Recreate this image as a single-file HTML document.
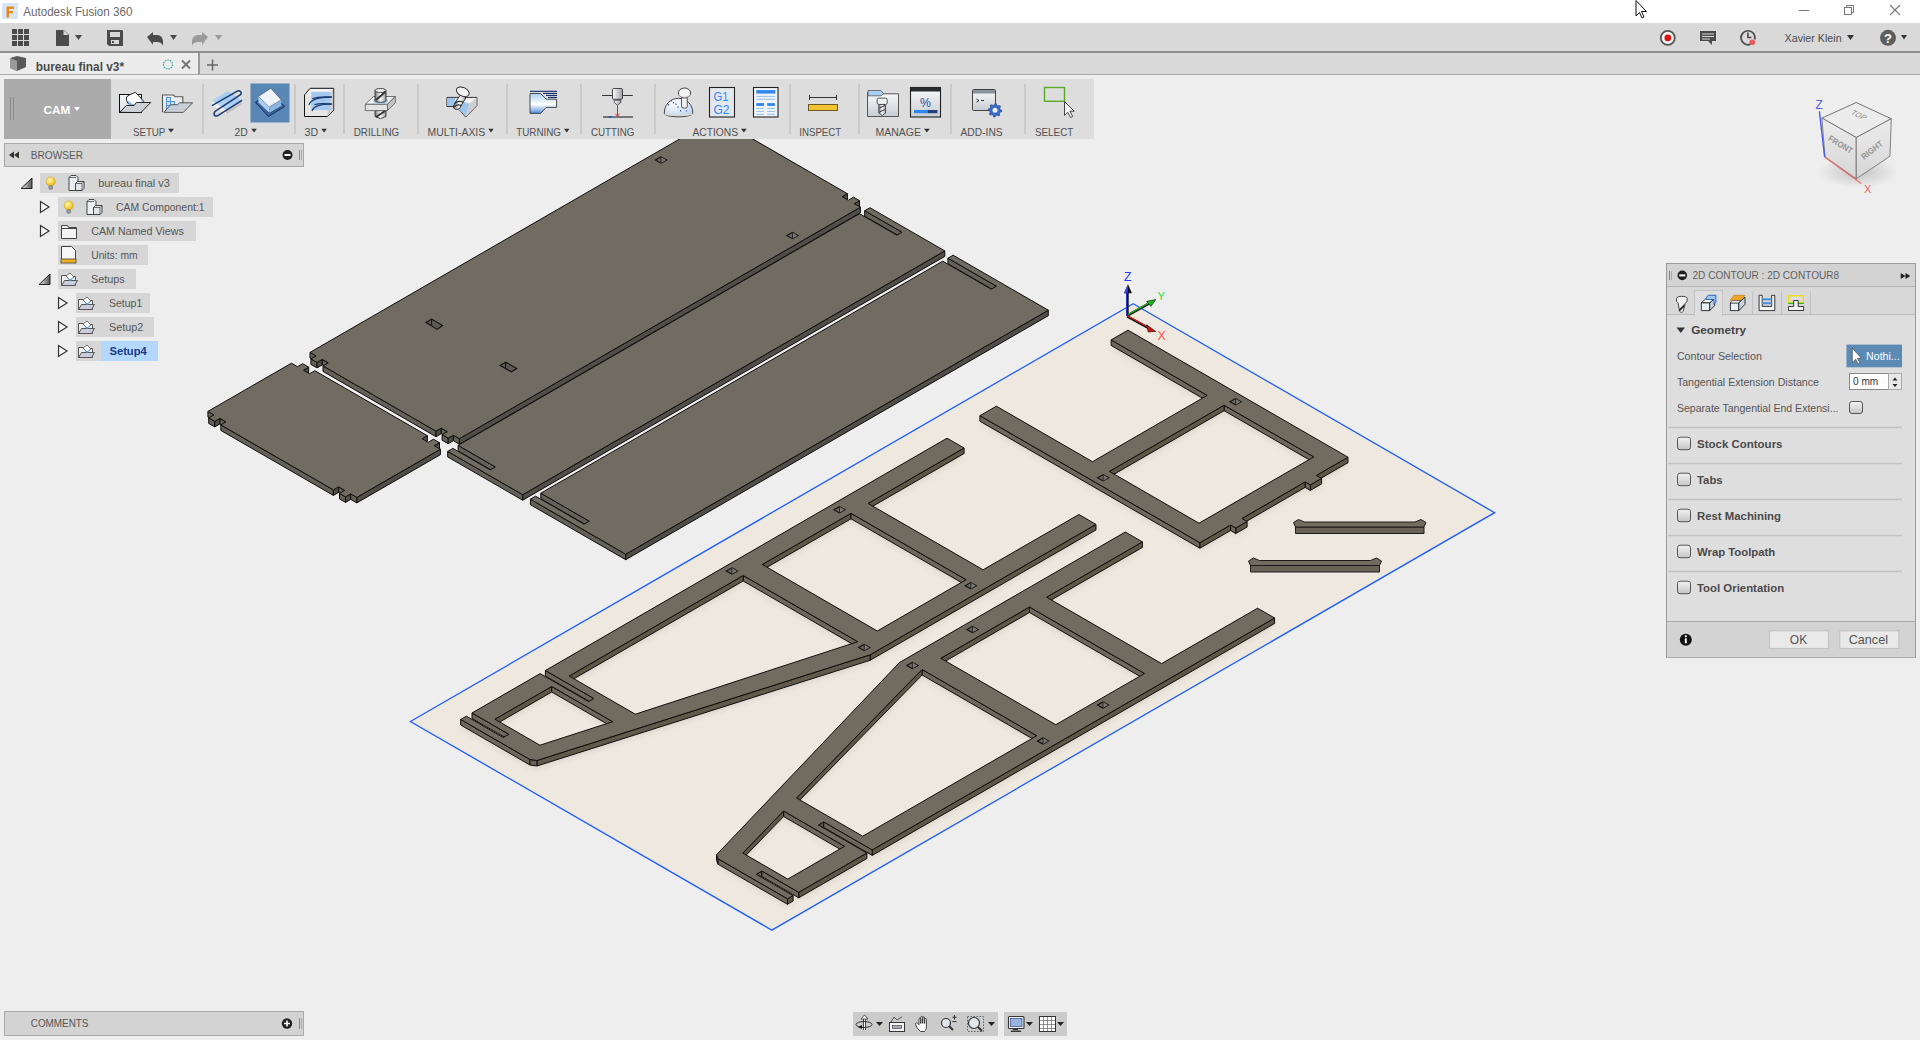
<!DOCTYPE html><html><head><meta charset="utf-8"><style>
*{margin:0;padding:0;box-sizing:border-box}
html,body{width:1920px;height:1040px;overflow:hidden;background:#eeeeee;font-family:"Liberation Sans",sans-serif;}
.a{position:absolute}
.t{position:absolute;white-space:nowrap;line-height:1}
svg{overflow:visible}
</style></head><body>
<svg width="1920" height="1040" viewBox="0 0 1920 1040" style="position:absolute;left:0;top:0">
<defs><filter id="sh" x="-5%" y="-5%" width="110%" height="110%"><feGaussianBlur stdDeviation="3"/></filter></defs>
<path d="M410.4,721.5L1133.2,303.7L1494.6,512.7L771.8,930.1Z" fill="#efe8de" stroke="#1f60fa" stroke-width="1.35"/>
<g stroke="#0e0d0b" stroke-width="1" stroke-linejoin="round">
<path d="M308.7,367.2L303.5,370.2L303.5,375.7L308.7,372.7Z" fill="#504e48"/>
<path d="M213.9,414.9L207.9,411.4L207.9,416.9L213.9,420.4Z" fill="#646159"/>
<path d="M214.8,421.4L208.7,417.9L208.7,423.4L214.8,426.9Z" fill="#646159"/>
<path d="M220.0,418.4L214.8,421.4L214.8,426.9L220.0,423.9Z" fill="#504e48"/>
<path d="M226.0,421.9L220.0,418.4L220.0,423.9L226.0,427.4Z" fill="#646159"/>
<path d="M427.4,435.7L422.2,438.7L422.2,444.2L427.4,441.2Z" fill="#504e48"/>
<path d="M439.5,442.7L434.3,445.7L434.3,451.2L439.5,448.2Z" fill="#504e48"/>
<path d="M333.4,489.9L220.8,424.9L220.8,430.4L333.4,495.4Z" fill="#646159"/>
<path d="M440.4,449.2L356.8,497.4L356.8,502.9L440.4,454.7Z" fill="#504e48"/>
<path d="M338.6,486.9L333.4,489.9L333.4,495.4L338.6,492.4Z" fill="#504e48"/>
<path d="M344.7,490.4L338.6,486.9L338.6,492.4L344.7,495.9Z" fill="#646159"/>
<path d="M345.5,496.9L339.5,493.4L339.5,498.9L345.5,502.4Z" fill="#646159"/>
<path d="M350.7,493.9L345.5,496.9L345.5,502.4L350.7,499.4Z" fill="#504e48"/>
<path d="M356.8,497.4L350.7,493.9L350.7,499.4L356.8,502.9Z" fill="#646159"/>
<path d="M291.4,363.2L297.5,366.7L302.7,363.7L308.7,367.2L303.5,370.2L309.6,373.7L314.8,370.7L427.4,435.7L422.2,438.7L428.3,442.2L433.5,439.2L439.5,442.7L434.3,445.7L440.4,449.2L356.8,497.4L350.7,493.9L345.5,496.9L339.5,493.4L344.7,490.4L338.6,486.9L333.4,489.9L220.8,424.9L226.0,421.9L220.0,418.4L214.8,421.4L208.7,417.9L213.9,414.9L207.9,411.4Z" fill="#706c61" fill-rule="evenodd"/>
</g>
<g stroke="#0e0d0b" stroke-width="1" stroke-linejoin="round">
<path d="M728.3,124.9L723.1,127.9L723.1,133.4L728.3,130.4Z" fill="#504e48"/>
<path d="M847.4,193.7L842.2,196.7L842.2,202.2L847.4,199.2Z" fill="#504e48"/>
<path d="M859.5,200.7L854.3,203.7L854.3,209.2L859.5,206.2Z" fill="#504e48"/>
<path d="M860.4,207.2L459.4,438.7L459.4,444.2L860.4,212.7Z" fill="#504e48"/>
<path d="M316.1,355.9L310.0,352.4L310.0,357.9L316.1,361.4Z" fill="#646159"/>
<path d="M317.0,362.4L310.9,358.9L310.9,364.4L317.0,367.9Z" fill="#646159"/>
<path d="M322.2,359.4L317.0,362.4L317.0,367.9L322.2,364.9Z" fill="#504e48"/>
<path d="M328.2,362.9L322.2,359.4L322.2,364.9L328.2,368.4Z" fill="#646159"/>
<path d="M436.0,431.2L323.0,365.9L323.0,371.4L436.0,436.7Z" fill="#646159"/>
<path d="M441.2,428.2L436.0,431.2L436.0,436.7L441.2,433.7Z" fill="#504e48"/>
<path d="M447.3,431.7L441.2,428.2L441.2,433.7L447.3,437.2Z" fill="#646159"/>
<path d="M448.2,438.2L442.1,434.7L442.1,440.2L448.2,443.7Z" fill="#646159"/>
<path d="M453.4,435.2L448.2,438.2L448.2,443.7L453.4,440.7Z" fill="#504e48"/>
<path d="M459.4,438.7L453.4,435.2L453.4,440.7L459.4,444.2Z" fill="#646159"/>
<path d="M711.0,120.9L717.1,124.4L722.3,121.4L728.3,124.9L723.1,127.9L729.2,131.4L734.4,128.4L847.4,193.7L842.2,196.7L848.3,200.2L853.5,197.2L859.5,200.7L854.3,203.7L860.4,207.2L459.4,438.7L453.4,435.2L448.2,438.2L442.1,434.7L447.3,431.7L441.2,428.2L436.0,431.2L323.0,365.9L328.2,362.9L322.2,359.4L317.0,362.4L310.9,358.9L316.1,355.9L310.0,352.4Z" fill="#706c61" fill-rule="evenodd"/>
</g>
<g stroke="#0e0d0b" stroke-width="1" stroke-linejoin="round">
<path d="M902.0,232.2L864.7,210.7L864.7,216.2L902.0,237.7Z" fill="#646159"/>
<path d="M944.8,250.9L522.7,494.7L522.7,500.2L944.8,256.4Z" fill="#504e48"/>
<path d="M495.4,466.9L458.1,445.4L458.1,450.9L495.4,472.4Z" fill="#646159"/>
<path d="M522.7,494.7L447.7,451.4L447.7,456.9L522.7,500.2Z" fill="#646159"/>
<path d="M869.9,207.7L944.8,250.9L522.7,494.7L447.7,451.4L452.9,448.4L490.2,469.9L495.4,466.9L458.1,445.4L859.5,213.7L896.8,235.2L902.0,232.2L864.7,210.7Z" fill="#706c61" fill-rule="evenodd"/>
</g>
<g stroke="#0e0d0b" stroke-width="1" stroke-linejoin="round">
<path d="M996.4,286.2L947.9,258.2L947.9,263.7L996.4,291.7Z" fill="#646159"/>
<path d="M1048.3,310.2L625.7,554.2L625.7,559.7L1048.3,315.7Z" fill="#504e48"/>
<path d="M589.3,521.2L540.8,493.2L540.8,498.7L589.3,526.7Z" fill="#646159"/>
<path d="M625.7,554.2L530.4,499.2L530.4,504.7L625.7,559.7Z" fill="#646159"/>
<path d="M953.1,255.2L1048.3,310.2L625.7,554.2L530.4,499.2L535.6,496.2L584.1,524.2L589.3,521.2L540.8,493.2L942.7,261.2L991.2,289.2L996.4,286.2L947.9,258.2Z" fill="#706c61" fill-rule="evenodd"/>
</g>
<path d="M1128.0,335.7L1348.0,462.7L1316.4,480.9L1321.6,483.9L1310.3,490.4L1305.1,487.4L1241.9,524.0L1247.1,527.0L1235.8,533.5L1230.6,530.5L1199.9,548.2L979.9,421.2L996.4,411.7L1092.5,467.2L1207.2,400.9L1111.1,345.4ZM1224.1,410.7L1313.8,462.4L1199.0,528.7L1109.4,476.9Z" fill="#000" fill-opacity="0.10" fill-rule="evenodd" filter="url(#sh)" transform="translate(0,2)"/>
<g stroke="#0e0d0b" stroke-width="1" stroke-linejoin="round">
<path d="M1207.2,395.4L1111.1,339.9L1111.1,345.4L1207.2,400.9Z" fill="#6e675c"/>
<path d="M1224.1,405.2L1313.8,456.9L1313.8,462.4L1224.1,410.7Z" fill="#6e675c"/>
<path d="M1109.4,471.4L1224.1,405.2L1224.1,410.7L1109.4,476.9Z" fill="#5f5646"/>
<path d="M1348.0,457.2L1316.4,475.4L1316.4,480.9L1348.0,462.7Z" fill="#5f5646"/>
<path d="M1199.9,542.7L979.9,415.7L979.9,421.2L1199.9,548.2Z" fill="#6e675c"/>
<path d="M1321.6,478.4L1310.3,484.9L1310.3,490.4L1321.6,483.9Z" fill="#5f5646"/>
<path d="M1310.3,484.9L1305.1,481.9L1305.1,487.4L1310.3,490.4Z" fill="#6e675c"/>
<path d="M1305.1,481.9L1241.9,518.5L1241.9,524.0L1305.1,487.4Z" fill="#5f5646"/>
<path d="M1247.1,521.5L1235.8,528.0L1235.8,533.5L1247.1,527.0Z" fill="#5f5646"/>
<path d="M1235.8,528.0L1230.6,525.0L1230.6,530.5L1235.8,533.5Z" fill="#6e675c"/>
<path d="M1230.6,525.0L1199.9,542.7L1199.9,548.2L1230.6,530.5Z" fill="#5f5646"/>
<path d="M1128.0,330.2L1348.0,457.2L1316.4,475.4L1321.6,478.4L1310.3,484.9L1305.1,481.9L1241.9,518.5L1247.1,521.5L1235.8,528.0L1230.6,525.0L1199.9,542.7L979.9,415.7L996.4,406.2L1092.5,461.7L1207.2,395.4L1111.1,339.9ZM1224.1,405.2L1313.8,456.9L1199.0,523.2L1109.4,471.4Z" fill="#726b5f" fill-rule="evenodd"/>
</g>
<path d="M1274.6,623.5L1257.6,613.7L1161.6,669.1L1046.6,602.7L1142.4,547.4L1125.3,537.5L899.5,668.0L716.5,860.3L718.2,864.3L787.5,904.3L793.1,901.0L756.3,879.8L761.9,876.5L798.7,897.8L866.9,858.5L818.4,830.5L823.7,827.4L872.2,855.4ZM1144.5,679.0L1029.5,612.5L940.8,663.8L1055.8,730.2ZM1036.7,741.2L922.1,675.0L796.5,803.5L862.7,841.7ZM844.6,851.8L783.6,816.5L742.8,858.6L787.8,884.6Z" fill="#000" fill-opacity="0.10" fill-rule="evenodd" filter="url(#sh)" transform="translate(0,2)"/>
<g stroke="#0e0d0b" stroke-width="1" stroke-linejoin="round">
<path d="M1046.6,597.2L1142.4,541.9L1142.4,547.4L1046.6,602.7Z" fill="#5f5646"/>
<path d="M1029.5,607.0L940.8,658.3L940.8,663.8L1029.5,612.5Z" fill="#5f5646"/>
<path d="M1144.5,673.5L1029.5,607.0L1029.5,612.5L1144.5,679.0Z" fill="#6e675c"/>
<path d="M1036.7,735.7L922.1,669.5L922.1,675.0L1036.7,741.2Z" fill="#6e675c"/>
<path d="M922.1,669.5L796.5,798.0L796.5,803.5L922.1,675.0Z" fill="#5f5646"/>
<path d="M872.2,849.9L1274.6,618.0L1274.6,623.5L872.2,855.4Z" fill="#5f5646"/>
<path d="M818.4,825.0L823.7,821.9L823.7,827.4L818.4,830.5Z" fill="#5f5646"/>
<path d="M844.6,846.3L783.6,811.0L783.6,816.5L844.6,851.8Z" fill="#6e675c"/>
<path d="M783.6,811.0L742.8,853.1L742.8,858.6L783.6,816.5Z" fill="#5f5646"/>
<path d="M823.7,821.9L872.2,849.9L872.2,855.4L823.7,827.4Z" fill="#6e675c"/>
<path d="M716.5,854.8L718.2,858.8L718.2,864.3L716.5,860.3Z" fill="#6e675c"/>
<path d="M798.7,892.3L866.9,853.0L866.9,858.5L798.7,897.8Z" fill="#5f5646"/>
<path d="M756.3,874.3L761.9,871.0L761.9,876.5L756.3,879.8Z" fill="#5f5646"/>
<path d="M718.2,858.8L787.5,898.8L787.5,904.3L718.2,864.3Z" fill="#6e675c"/>
<path d="M761.9,871.0L798.7,892.3L798.7,897.8L761.9,876.5Z" fill="#6e675c"/>
<path d="M787.5,898.8L793.1,895.5L793.1,901.0L787.5,904.3Z" fill="#5f5646"/>
<path d="M1274.6,618.0L1257.6,608.2L1161.6,663.6L1046.6,597.2L1142.4,541.9L1125.3,532.0L899.5,662.5L716.5,854.8L718.2,858.8L787.5,898.8L793.1,895.5L756.3,874.3L761.9,871.0L798.7,892.3L866.9,853.0L818.4,825.0L823.7,821.9L872.2,849.9ZM1144.5,673.5L1029.5,607.0L940.8,658.3L1055.8,724.7ZM1036.7,735.7L922.1,669.5L796.5,798.0L862.7,836.2ZM844.6,846.3L783.6,811.0L742.8,853.1L787.8,879.1Z" fill="#726b5f" fill-rule="evenodd"/>
</g>
<path d="M947.0,443.7L964.1,453.5L868.1,508.9L983.1,575.3L1078.9,520.0L1096.0,529.9L870.1,660.3L536.9,766.0L530.0,765.0L460.7,725.0L466.4,721.7L503.2,743.0L508.8,739.7L472.0,718.5L540.1,679.1L588.6,707.1L593.9,704.0L545.4,676.0ZM851.0,518.8L966.1,585.2L877.3,636.5L762.3,570.0ZM743.2,581.0L857.8,647.2L635.3,719.8L569.2,681.5ZM551.7,692.0L612.7,727.2L539.9,750.8L494.9,724.8Z" fill="#000" fill-opacity="0.10" fill-rule="evenodd" filter="url(#sh)" transform="translate(0,2)"/>
<g stroke="#0e0d0b" stroke-width="1" stroke-linejoin="round">
<path d="M964.1,448.0L868.1,503.4L868.1,508.9L964.1,453.5Z" fill="#5f5646"/>
<path d="M762.3,564.5L851.0,513.3L851.0,518.8L762.3,570.0Z" fill="#5f5646"/>
<path d="M851.0,513.3L966.1,579.7L966.1,585.2L851.0,518.8Z" fill="#6e675c"/>
<path d="M1096.0,524.4L870.1,654.8L870.1,660.3L1096.0,529.9Z" fill="#5f5646"/>
<path d="M743.2,575.5L857.8,641.7L857.8,647.2L743.2,581.0Z" fill="#6e675c"/>
<path d="M569.2,676.0L743.2,575.5L743.2,581.0L569.2,681.5Z" fill="#5f5646"/>
<path d="M593.9,698.5L545.4,670.5L545.4,676.0L593.9,704.0Z" fill="#6e675c"/>
<path d="M494.9,719.2L551.7,686.5L551.7,692.0L494.9,724.8Z" fill="#5f5646"/>
<path d="M551.7,686.5L612.7,721.7L612.7,727.2L551.7,692.0Z" fill="#6e675c"/>
<path d="M870.1,654.8L536.9,760.5L536.9,766.0L870.1,660.3Z" fill="#61594a"/>
<path d="M508.8,734.2L472.0,713.0L472.0,718.5L508.8,739.7Z" fill="#6e675c"/>
<path d="M530.0,759.5L460.7,719.5L460.7,725.0L530.0,765.0Z" fill="#6e675c"/>
<path d="M536.9,760.5L530.0,759.5L530.0,765.0L536.9,766.0Z" fill="#696155"/>
<path d="M947.0,438.2L964.1,448.0L868.1,503.4L983.1,569.8L1078.9,514.5L1096.0,524.4L870.1,654.8L536.9,760.5L530.0,759.5L460.7,719.5L466.4,716.2L503.2,737.5L508.8,734.2L472.0,713.0L540.1,673.6L588.6,701.6L593.9,698.5L545.4,670.5ZM851.0,513.3L966.1,579.7L877.3,631.0L762.3,564.5ZM743.2,575.5L857.8,641.7L635.3,714.2L569.2,676.0ZM551.7,686.5L612.7,721.7L539.9,745.2L494.9,719.2Z" fill="#726b5f" fill-rule="evenodd"/>
</g>
<path d="M426.1,322.5L431.6,319.1L442.6,325.5L437.2,329.4Z" fill="#5e5b55" stroke="#111" stroke-width="1.1"/><path d="M431.6,319.1V325.3" stroke="#111" stroke-width="1"/>
<path d="M500.1,365.4L505.6,362.25L516.8,368.5L511.4,371.8Z" fill="#5e5b55" stroke="#111" stroke-width="1.1"/><path d="M505.6,362.25V368.45" stroke="#111" stroke-width="1"/>
<path d="M655.4,160.1L661.0,157.0L666.6,160.1L661.0,163.2Z" fill="#6c685e" stroke="#111" stroke-width="1.1"/><path d="M661.0,157.1L666.0,160.1L661.0,163.1Z" fill="#7a7772"/><path d="M661.0,157.1V163.1" stroke="#222" stroke-width="0.9"/>
<path d="M786.9,235.6L792.5,232.5L798.1,235.6L792.5,238.7Z" fill="#6c685e" stroke="#111" stroke-width="1.1"/><path d="M792.5,232.6L797.5,235.6L792.5,238.6Z" fill="#7a7772"/><path d="M792.5,232.6V238.6" stroke="#222" stroke-width="0.9"/>
<path d="M1230.0,401.7L1235.6,398.6L1241.2,401.7L1235.6,404.8Z" fill="#6c685e" stroke="#111" stroke-width="1.1"/><path d="M1235.6,398.7L1240.6,401.7L1235.6,404.7Z" fill="#7a7772"/><path d="M1235.6,398.7V404.7" stroke="#222" stroke-width="0.9"/>
<path d="M1097.6,477.8L1103.2,474.7L1108.8,477.8L1103.2,480.9Z" fill="#6c685e" stroke="#111" stroke-width="1.1"/><path d="M1103.2,474.8L1108.2,477.8L1103.2,480.8Z" fill="#7a7772"/><path d="M1103.2,474.8V480.8" stroke="#222" stroke-width="0.9"/>
<path d="M833.9,509.8L839.5,506.7L845.1,509.8L839.5,512.9Z" fill="#6c685e" stroke="#111" stroke-width="1.1"/><path d="M839.5,506.8L844.5,509.8L839.5,512.8Z" fill="#7a7772"/><path d="M839.5,506.8V512.8" stroke="#222" stroke-width="0.9"/>
<path d="M726.3,570.9L731.9,567.8L737.5,570.9L731.9,574.0Z" fill="#6c685e" stroke="#111" stroke-width="1.1"/><path d="M731.9,567.9L736.9,570.9L731.9,573.9Z" fill="#7a7772"/><path d="M731.9,567.9V573.9" stroke="#222" stroke-width="0.9"/>
<path d="M965.2,585.7L970.8,582.6L976.4,585.7L970.8,588.8Z" fill="#6c685e" stroke="#111" stroke-width="1.1"/><path d="M970.8,582.7L975.8,585.7L970.8,588.7Z" fill="#7a7772"/><path d="M970.8,582.7V588.7" stroke="#222" stroke-width="0.9"/>
<path d="M858.6,647.6L864.2,644.5L869.8,647.6L864.2,650.7Z" fill="#6c685e" stroke="#111" stroke-width="1.1"/><path d="M864.2,644.6L869.2,647.6L864.2,650.6Z" fill="#7a7772"/><path d="M864.2,644.6V650.6" stroke="#222" stroke-width="0.9"/>
<path d="M966.9,629.4L972.5,626.3L978.1,629.4L972.5,632.5Z" fill="#6c685e" stroke="#111" stroke-width="1.1"/><path d="M972.5,626.4L977.5,629.4L972.5,632.4Z" fill="#7a7772"/><path d="M972.5,626.4V632.4" stroke="#222" stroke-width="0.9"/>
<path d="M906.8,665.5L912.4,662.4L918.0,665.5L912.4,668.6Z" fill="#6c685e" stroke="#111" stroke-width="1.1"/><path d="M912.4,662.5L917.4,665.5L912.4,668.5Z" fill="#7a7772"/><path d="M912.4,662.5V668.5" stroke="#222" stroke-width="0.9"/>
<path d="M1097.4,705.0L1103.0,701.9L1108.6,705.0L1103.0,708.1Z" fill="#6c685e" stroke="#111" stroke-width="1.1"/><path d="M1103.0,702.0L1108.0,705.0L1103.0,708.0Z" fill="#7a7772"/><path d="M1103.0,702.0V708.0" stroke="#222" stroke-width="0.9"/>
<path d="M1037.4,741.0L1043.0,737.9L1048.6,741.0L1043.0,744.1Z" fill="#6c685e" stroke="#111" stroke-width="1.1"/><path d="M1043.0,738.0L1048.0,741.0L1043.0,744.0Z" fill="#7a7772"/><path d="M1043.0,738.0V744.0" stroke="#222" stroke-width="0.9"/>
<g stroke="#1c1a17" stroke-width="1"><path d="M1295.5,527.0L1424,527.0L1424,533.5L1295.5,533.5Z" fill="#6a6256"/><path d="M1293.5,522.5L1298.5,519.5L1304.5,522.0L1415,522.0L1421,519.5L1426,522.5L1424,527.0L1295.5,527.0Z" fill="#726b5f"/></g>
<g stroke="#1c1a17" stroke-width="1"><path d="M1250.5,565.5L1379.5,565.5L1379.5,572L1250.5,572Z" fill="#6a6256"/><path d="M1248.5,561L1253.5,558L1259.5,560.5L1370.5,560.5L1376.5,558L1381.5,561L1379.5,565.5L1250.5,565.5Z" fill="#726b5f"/></g>
<g><line x1="1127.4" y1="316" x2="1127.4" y2="292" stroke="#111" stroke-width="2.6"/><line x1="1126.6" y1="316" x2="1126.6" y2="292" stroke="#2a3ad8" stroke-width="1"/><path d="M1124,293.2L1128,284.2L1131.9,293.2Z" fill="#111"/><path d="M1124,293.2L1128,284.2L1127.6,293.2Z" fill="#3344ee"/><line x1="1128" y1="315.2" x2="1150.5" y2="302.6" stroke="#111" stroke-width="2.6"/><line x1="1128" y1="314.6" x2="1150.5" y2="302" stroke="#22cc22" stroke-width="1.1"/><path d="M1146.6,301.3L1155.8,299.6L1150.9,306.4Z" fill="#18b818" stroke="#111" stroke-width="0.6"/><line x1="1127.2" y1="316.4" x2="1148.8" y2="328.2" stroke="#111" stroke-width="2.6"/><line x1="1127.2" y1="315.8" x2="1148.8" y2="327.6" stroke="#e02020" stroke-width="1.1"/><path d="M1146.6,324.8L1155.8,331.4L1148.2,332Z" fill="#cc1414" stroke="#111" stroke-width="0.6"/></g>
<text x="1124" y="280.8" font-family="Liberation Sans" font-size="12" fill="#2a3af0" textLength="7.5" lengthAdjust="spacingAndGlyphs">Z</text>
<text x="1157.6" y="300.2" font-family="Liberation Sans" font-size="11.5" fill="#30e030" textLength="7.5" lengthAdjust="spacingAndGlyphs">Y</text>
<text x="1157.6" y="340" font-family="Liberation Sans" font-size="12" fill="#ff5050" textLength="8.2" lengthAdjust="spacingAndGlyphs">X</text>
</svg>
<div class="a" style="left:0;top:0;width:1920px;height:23px;background:#ffffff"></div>
<svg class="a" style="left:2px;top:3px" width="16" height="16"><rect x="0" y="0" width="16" height="16" fill="#d6e6f5"/><path d="M4.5,3.5h7.5v2.5h-5v2h4v2.3h-4v4.2h-2.5z" fill="#e8891e"/></svg>
<svg class="a" style="left:1790px;top:0" width="130" height="23">
<line x1="1799" y1="10.5" x2="1809" y2="10.5" stroke="#777" stroke-width="1" transform="translate(-1790,0)"/>
<g transform="translate(-1790,0)" fill="none" stroke="#777" stroke-width="1"><rect x="1844.5" y="7.5" width="7" height="7"/><path d="M1846.5,7.5v-2h7v7h-2"/></g>
<g transform="translate(-1790,0)" stroke="#777" stroke-width="1.1"><line x1="1890" y1="5" x2="1900" y2="15"/><line x1="1900" y1="5" x2="1890" y2="15"/></g>
</svg>
<div class="a" style="left:0;top:23px;width:1920px;height:28px;background:#d9d9d9"></div>
<div class="a" style="left:0;top:51px;width:1920px;height:2px;background:#8f8f8f"></div>
<svg class="a" style="left:0;top:23px" width="240" height="28">
<g fill="#4b4b4b">
<rect x="12" y="6" width="5" height="5"/><rect x="18" y="6" width="5" height="5"/><rect x="24" y="6" width="5" height="5"/>
<rect x="12" y="12" width="5" height="5"/><rect x="18" y="12" width="5" height="5"/><rect x="24" y="12" width="5" height="5"/>
<rect x="12" y="18" width="5" height="5"/><rect x="18" y="18" width="5" height="5"/><rect x="24" y="18" width="5" height="5"/>
<path d="M56,7h8l5,5v11h-13z"/><path d="M75,12h7l-3.5,5z"/>
<path d="M107,7h15l1,1v15h-14l-2,-2z"/>
<path d="M147,14l6,-5v3h4c4,0 6,3 6,7v4c-1,-3 -3,-4 -6,-4h-4v3z"/><path d="M170,12h7l-3.5,5z"/>
</g>
<g fill="#d9d9d9"><path d="M63.5,7v5h5z" fill="#d9d9d9"/><rect x="110" y="9" width="10" height="5"/><rect x="111" y="17" width="8" height="4"/></g>
<rect x="112" y="18" width="2" height="2" fill="#4b4b4b"/>
<g fill="#9a9a9a"><path d="M208,14l-6,-5v3h-4c-4,0 -6,3 -6,7v4c1,-3 3,-4 6,-4h4v3z"/><path d="M215,12h7l-3.5,5z"/></g>
</svg>
<svg class="a" style="left:1650px;top:23px" width="270" height="28">
<circle cx="17.8" cy="14.9" r="7" fill="#f4f4f4" stroke="#555" stroke-width="1.8"/><circle cx="17.8" cy="14.9" r="3.3" fill="#e01010"/>
<path d="M50,8h16v10h-4v4l-4,-4h-8z" fill="#4a4a4a"/><g stroke="#d9d9d9" stroke-width="1"><line x1="52" y1="11" x2="64" y2="11"/><line x1="52" y1="13.5" x2="64" y2="13.5"/><line x1="52" y1="16" x2="60" y2="16"/></g>
<path d="M100.5,21.3 A7,7 0 1 1 104.8,16.5" fill="none" stroke="#4a4a4a" stroke-width="1.7"/><path d="M97.9,9.5v5h3.5" fill="none" stroke="#4a4a4a" stroke-width="1.6"/><circle cx="102.3" cy="19.2" r="2.8" fill="#e85a5a"/>
<path d="M197,12h7l-3.5,5z" fill="#333"/>
<circle cx="238" cy="14.8" r="8" fill="#5e5e5e"/><text x="234" y="19.5" font-family="Liberation Sans" font-weight="bold" font-size="13" fill="#fff">?</text>
<path d="M251,12h6l-3,4.5z" fill="#333"/>
</svg>
<div class="a" style="left:0;top:53px;width:1920px;height:21px;background:#d9d9d9"></div>
<div class="a" style="left:0;top:53px;width:198px;height:21px;background:#ececec"></div>
<div class="a" style="left:198px;top:53px;width:2px;height:21px;background:#9a9a9a"></div>
<div class="a" style="left:0;top:74px;width:1920px;height:1px;background:#a9a9a9"></div>
<svg class="a" style="left:0;top:53px" width="240" height="21">
<path d="M10,5l7,-2l9,2v9l-9,4l-7,-3z" fill="#5a5a5a"/><path d="M10,5l7,3v10l-7,-3z" fill="#9b9b9b"/>
<circle cx="168" cy="11.5" r="4.5" fill="none" stroke="#3aa5a0" stroke-width="1.2" stroke-dasharray="1.5 1"/>
<g stroke="#777" stroke-width="2"><line x1="182" y1="7.5" x2="190" y2="15.5"/><line x1="190" y1="7.5" x2="182" y2="15.5"/></g>
<g stroke="#666" stroke-width="1.5"><line x1="207" y1="12" x2="218" y2="12"/><line x1="212.5" y1="6.5" x2="212.5" y2="17.5"/></g>
</svg>
<div class="a" style="left:4px;top:79px;width:1090px;height:60px;background:#dddddd"></div>
<div class="a" style="left:4px;top:79px;width:107px;height:60px;background:#ababab"></div>
<div class="a" style="left:10px;top:97px;width:1px;height:23px;background:#8a8a8a"></div>
<div class="a" style="left:13px;top:97px;width:1px;height:23px;background:#8a8a8a"></div>
<svg class="a" style="left:74px;top:107px" width="8" height="5"><path d="M0,0h6l-3,4z" fill="#fff"/></svg>
<div class="a" style="left:202px;top:84px;width:2px;height:50px;background:#cacaca"></div>
<div class="a" style="left:294px;top:84px;width:2px;height:50px;background:#cacaca"></div>
<div class="a" style="left:343px;top:84px;width:2px;height:50px;background:#cacaca"></div>
<div class="a" style="left:417px;top:84px;width:2px;height:50px;background:#cacaca"></div>
<div class="a" style="left:506px;top:84px;width:2px;height:50px;background:#cacaca"></div>
<div class="a" style="left:580px;top:84px;width:2px;height:50px;background:#cacaca"></div>
<div class="a" style="left:654px;top:84px;width:2px;height:50px;background:#cacaca"></div>
<div class="a" style="left:789px;top:84px;width:2px;height:50px;background:#cacaca"></div>
<div class="a" style="left:858px;top:84px;width:2px;height:50px;background:#cacaca"></div>
<div class="a" style="left:950px;top:84px;width:2px;height:50px;background:#cacaca"></div>
<div class="a" style="left:1024px;top:84px;width:2px;height:50px;background:#cacaca"></div>
<svg class="a" style="left:0;top:0" width="1100" height="140">
<!-- setup 1 -->
<defs><linearGradient id="fb" x1="0" y1="0" x2="0" y2="1"><stop offset="0" stop-color="#f4f5f8"/><stop offset="1" stop-color="#d8dce4"/></linearGradient></defs>
<rect x="119.5" y="94.5" width="22" height="18" fill="url(#fb)" stroke="#111" stroke-width="1"/>
<path d="M126.5,97l3.3,-2.3l5.6,-2.4l8,8.6l0.6,1.6l-9.5,3l-6.5,-2l-1.5,-3.4z" fill="#ffffff" stroke="#111" stroke-width="0.9"/>
<path d="M127.5,100.5l6.5,4.8l-5,-0.5z" fill="#7ab4f0"/><path d="M140.5,101l2.5,-1.5l0.8,2.5z" fill="#5a9ae0"/>
<path d="M119.7,112.3l6.8,-6.8h7.5l2.4,-3h14.3l-9.9,10.1z" fill="#cdd1d6" stroke="#111" stroke-width="0.9"/>
<!-- setup 2 -->
<path d="M162.5,112.3v-17.3h10.9l1.6,1.7h7.8v6.2" fill="url(#fb)" stroke="#555" stroke-width="1.1"/>
<g fill="#cfe0f2" stroke="#4a90e0" stroke-width="0.9"><rect x="166.5" y="97.5" width="4" height="4"/><rect x="166.5" y="101.5" width="4" height="4"/><rect x="170.5" y="101.5" width="4" height="4"/><rect x="166.5" y="105.5" width="4" height="4"/><rect x="170.5" y="105.5" width="4" height="4"/><rect x="174.5" y="105.5" width="4" height="4"/></g>
<path d="M164,112.3l6.6,-7.6h7l1.9,-1.9h13.1l-9.3,9.6z" fill="#c8ced6" fill-opacity="0.92" stroke="#555" stroke-width="1"/>
<!-- 2D adaptive -->
<path d="M212,100.6l15.5,-9.5l14.1,9.2l-15.5,9.8z" fill="#a8cdf0"/>
<path d="M212,100.6v4.5l14.1,9.3v-4.5z" fill="#f0f0f0"/><path d="M226.1,110.1v4.5l15.5,-9.8v-4.5z" fill="#c4c4c4"/>
<path d="M212,100.6l6,-3.6l14.1,9.2l-6,3.9z" fill="#b8d6f2" fill-opacity="0.6"/>
<g fill="none" stroke="#1a3a72" stroke-width="1.5" stroke-linecap="round"><path d="M212.4,105.3L236.8,91.3C240,89.6 242.8,93.2 240.2,95L216.2,110.6C212.6,112.8 214,117.6 217.8,115.6L241.6,100.6"/></g>
<!-- 2D contour active -->
<rect x="250.5" y="83.5" width="39" height="39" fill="#5887b5"/>
<path d="M255.3,102.4L270,93.5L284.8,106.3L268.6,116.5Z" fill="#3a64a0" stroke="#13306a" stroke-width="1"/>
<path d="M258.4,96.4L270.8,88.3L281.3,99.9L269.3,107Z" fill="#f0f4f8" stroke="#333" stroke-width="0.5"/>
<path d="M258.4,96.4L269.3,107V113.3L258.4,103Z" fill="#a8cdf0"/>
<path d="M269.3,107L281.3,99.9V106.6L269.3,113.3Z" fill="#8ab6e2"/>
<path d="M258.4,103L269.3,113.3L281.3,106.6" fill="none" stroke="#2a3a60" stroke-width="0.7"/>
<!-- 3D -->
<path d="M304.5,95L310.1,88.3H333.7V110.1L327.4,116.5H304.5Z" fill="#e6e6e6" stroke="#111" stroke-width="1"/>
<path d="M305,95.5H327.5L333.2,89H310.5Z" fill="#f4f4f4"/><path d="M327.5,95.5V116L333.2,110V89Z" fill="#cfcfcf"/>
<rect x="311.2" y="91.8" width="19" height="18.3" fill="#a4c8ee"/>
<g fill="none" stroke="#1a3a72" stroke-width="1.3" stroke-linecap="round"><path d="M309.1,104.5C311,99 320,97 331.6,97.1"/><path d="M313,98.5C318,96.5 325,96.6 331,97"/><path d="M312.2,110.5C314.5,105 322,104 331.6,104.2"/><path d="M315,104.5C320,103 326,103.5 331,104"/></g>
<!-- drilling -->
<defs><linearGradient id="dr" x1="0" y1="0" x2="1" y2="0"><stop offset="0" stop-color="#777"/><stop offset="0.5" stop-color="#fff"/><stop offset="1" stop-color="#999"/></linearGradient></defs>
<path d="M375,110.6V116.5L380.5,118.7L386,116.5V110.6Z" fill="url(#dr)" stroke="#222" stroke-width="0.8"/>
<path d="M376,117L385.5,110.8" stroke="#333" stroke-width="1.8"/>
<path d="M365.3,104.3L373.4,96.5H395.3L387.5,104.3Z" fill="#f2f2f2" stroke="#555" stroke-width="0.8"/>
<path d="M365.3,104.3H387.5V110.6H365.3Z" fill="#e2e2e2" stroke="#555" stroke-width="0.8"/>
<path d="M387.5,104.3L395.3,96.5V102.8L387.5,110.6Z" fill="#c6c6c6" stroke="#555" stroke-width="0.8"/>
<ellipse cx="380.6" cy="100.8" rx="7.5" ry="2.8" fill="#8ec0ec"/>
<path d="M375,90.5V100.5C375,102.8 386,102.8 386,100.5V90.5Z" fill="url(#dr)" stroke="#222" stroke-width="0.8"/>
<ellipse cx="380.5" cy="90.5" rx="5.5" ry="2" fill="#eee" stroke="#222" stroke-width="0.8"/>
<path d="M376,100L385.5,91.8" stroke="#333" stroke-width="2"/>
<!-- multi axis -->
<path d="M446.9,97.4H476.9V105.6L465.6,117.1L458.75,109L455,106.5H446.9Z" fill="#e8e8e8" stroke="#222" stroke-width="0.9"/>
<path d="M447.4,98H455V106H447.4Z" fill="#9cc4ec"/>
<path d="M461.25,100.9L469.4,103.4L465.6,116.5L458.75,109Z" fill="#9cc4ec"/>
<path d="M461.25,100.9L476.5,97.8L469.4,103.4Z" fill="#f6f6f6"/>
<path d="M469.4,103.4L476.5,97.8V105.4L465.8,116.6Z" fill="#cfcfcf"/>
<path d="M455.5,102L460.5,95L466,97.5L459.5,108.5C457,110.5 452.5,109 453.5,106Z" fill="url(#dr)" stroke="#222" stroke-width="0.9"/>
<g stroke="#333" stroke-width="1.2" fill="none"><path d="M455,103.5C457,101.5 460,101 463,102"/><path d="M454,107C456,105 459,104.5 461.5,105.5"/></g>
<ellipse cx="462.8" cy="91.8" rx="6.8" ry="4.3" transform="rotate(25 462.8 91.8)" fill="#f0f2f4" stroke="#222" stroke-width="0.9"/>
<!-- turning -->
<defs><linearGradient id="tg" x1="0" y1="0" x2="0" y2="1"><stop offset="0" stop-color="#a8d0f4"/><stop offset="0.55" stop-color="#ffffff"/><stop offset="1" stop-color="#4f8ede"/></linearGradient>
<linearGradient id="hg" x1="0" y1="0" x2="1" y2="0"><stop offset="0" stop-color="#ffffff"/><stop offset="1" stop-color="#a0a0a8"/></linearGradient></defs>
<path d="M530,93.5H540.6L546.25,99.2H556.6V107.4H546.25L540.6,113.4H530Z" fill="url(#tg)" stroke="#3a3a3a" stroke-width="0.9"/>
<g stroke="#0f2a6a" stroke-width="1.1"><line x1="530" y1="91.3" x2="557" y2="91.3"/><line x1="543" y1="93.4" x2="557" y2="93.4"/><line x1="546" y1="95.4" x2="557" y2="95.4"/><line x1="548" y1="97.4" x2="557" y2="97.4"/></g>
<!-- cutting -->
<g stroke="#333" stroke-width="1"><line x1="602" y1="95.5" x2="612" y2="95.5"/><line x1="622.8" y1="95.5" x2="632.8" y2="95.5"/></g>
<rect x="612.5" y="88.5" width="10" height="10.8" rx="1.2" fill="url(#hg)" stroke="#333" stroke-width="0.9"/>
<path d="M614.2,100.2H620.8V102.5L617.5,105.2L614.2,102.5Z" fill="url(#hg)" stroke="#333" stroke-width="0.8"/>
<line x1="617.5" y1="105.3" x2="617.5" y2="116" stroke="#e81818" stroke-width="1"/><path d="M615.3,113.8L617.5,116L619.7,113.8" fill="none" stroke="#e81818" stroke-width="0.9"/>
<line x1="603" y1="117" x2="633" y2="117" stroke="#6a6a6a" stroke-width="1.8"/><rect x="608.8" y="116" width="2.5" height="2" fill="#1060d0"/>
<!-- actions: joystick -->
<defs><radialGradient id="jd" cx="0.35" cy="0.3" r="0.8"><stop offset="0" stop-color="#ffffff"/><stop offset="1" stop-color="#b8d4f0"/></radialGradient></defs>
<path d="M664.3,113C664.3,104 671,98.3 678.5,98.3C686,98.3 692.8,104 692.8,113C692.8,115.5 686,116.8 678.5,116.8C671,116.8 664.3,115.5 664.3,113Z" fill="url(#jd)" stroke="#333" stroke-width="0.9"/>
<path d="M664.8,113C668,114.8 689,114.8 692.3,113V114.5C689,116.5 668,116.5 664.8,114.5Z" fill="#d8d8d8"/>
<g fill="#1a3a8a"><circle cx="668.5" cy="104.8" r="0.7"/><circle cx="671.2" cy="100.9" r="0.7"/><circle cx="673.5" cy="102.8" r="0.7"/><circle cx="676" cy="104.3" r="0.7"/><circle cx="678" cy="107" r="0.7"/><circle cx="680.6" cy="110.8" r="0.7"/><circle cx="686.5" cy="110.8" r="0.6"/></g>
<rect x="681.5" y="97.5" width="5.8" height="10.5" rx="1.5" fill="#f0f0f0" stroke="#333" stroke-width="0.8"/>
<ellipse cx="684.5" cy="93" rx="6.2" ry="5" fill="#f4f4f4" stroke="#333" stroke-width="0.9"/>
<path d="M678.5,94.5C680,98 689,98 690.5,94.5" fill="none" stroke="#bbb" stroke-width="0.8"/>
<!-- G1 G2 -->
<rect x="709.5" y="87.5" width="25" height="29.5" fill="#e4e8ec" stroke="#222" stroke-width="1.1"/>
<text x="713.5" y="100.6" font-family="Liberation Sans" font-size="12.5" fill="#2a8aff" textLength="15" lengthAdjust="spacingAndGlyphs">G1</text><text x="713.5" y="114" font-family="Liberation Sans" font-size="12.5" fill="#2a8aff" textLength="16" lengthAdjust="spacingAndGlyphs">G2</text>
<!-- doc -->
<rect x="753.5" y="87.5" width="24.5" height="29.5" fill="#f0f4f8" stroke="#222" stroke-width="1.1"/>
<rect x="756.3" y="90.1" width="19" height="3.5" fill="#2f86f0"/>
<rect x="756.3" y="103.1" width="7.7" height="2.8" fill="#2f86f0"/><rect x="767.2" y="103.1" width="7.7" height="2.8" fill="#2f86f0"/>
<g stroke="#7ab0e8" stroke-width="0.8"><line x1="756.3" y1="96.4" x2="775" y2="96.4"/><line x1="756.3" y1="99.2" x2="775" y2="99.2"/>
<line x1="756.3" y1="108.4" x2="764" y2="108.4"/><line x1="756.3" y1="111.4" x2="764" y2="111.4"/><line x1="756.3" y1="114.3" x2="764" y2="114.3"/>
<line x1="767.2" y1="108.4" x2="775" y2="108.4"/><line x1="767.2" y1="111.4" x2="775" y2="111.4"/><line x1="767.2" y1="114.3" x2="775" y2="114.3"/></g>
<!-- inspect ruler -->
<g stroke="#333" stroke-width="1"><line x1="809" y1="97.5" x2="837" y2="97.5"/><line x1="809.5" y1="95" x2="809.5" y2="100"/><line x1="836.5" y1="95" x2="836.5" y2="100"/></g>
<rect x="808.5" y="104.5" width="29" height="6" fill="#f2c230" stroke="#6a5a20" stroke-width="1"/>
<!-- manage 1 -->
<defs><linearGradient id="mg" x1="0" y1="0" x2="0" y2="1"><stop offset="0" stop-color="#fafafa"/><stop offset="1" stop-color="#c8ccd4"/></linearGradient></defs>
<path d="M867.5,92.5H880.5L882.5,93.8H898.5V116.5H867.5Z" fill="url(#mg)" stroke="#555" stroke-width="1"/>
<path d="M868,90.5H881L883.5,93.5L881,95.8H868Z" fill="#a8d0f0" stroke="#555" stroke-width="0.8"/>
<path d="M878.8,104.5H885.6V113L882.2,115.5L878.8,113Z" fill="url(#dr)" stroke="#333" stroke-width="0.8"/>
<path d="M879.5,108L885,105.5M879.5,112L885,109.5" stroke="#333" stroke-width="1"/>
<rect x="877.2" y="98.2" width="10" height="6.2" rx="1.5" fill="#f2f2f2" stroke="#333" stroke-width="0.8"/>
<!-- manage 2 % -->
<rect x="910.5" y="87.5" width="30" height="29.5" fill="url(#mg)" stroke="#222" stroke-width="1.1"/><rect x="910.5" y="87.5" width="30" height="4" fill="#2a2a2a"/>
<g fill="#1a3a9a"><circle cx="914" cy="89.5" r="0.4"/><circle cx="918" cy="89.5" r="0.4"/><circle cx="922" cy="89.5" r="0.4"/><circle cx="926" cy="89.5" r="0.4"/><circle cx="930" cy="89.5" r="0.4"/><circle cx="934" cy="89.5" r="0.4"/><circle cx="938" cy="89.5" r="0.4"/></g>
<text x="920" y="107" font-family="Liberation Sans" font-size="12" fill="#1f4fa0" textLength="11" lengthAdjust="spacingAndGlyphs">%</text>
<rect x="914" y="110" width="13.5" height="3.2" fill="#2f86f0"/><rect x="927.5" y="110" width="10" height="3.2" fill="#22417a"/>
<!-- add-ins -->
<rect x="972.5" y="89.5" width="23" height="21" rx="1" fill="url(#mg)" stroke="#444" stroke-width="1"/><rect x="973" y="90" width="22" height="3.5" fill="#8a93a0"/>
<path d="M976.5,99l2.5,1.6l-2.5,1.6M981,100.5h3" fill="none" stroke="#222" stroke-width="0.9"/>
<path d="M1001.80,110.30L1001.67,111.63L999.80,112.29L999.32,113.19L999.81,115.11L998.78,115.95L996.99,115.10L996.01,115.40L995.00,117.10L993.67,116.97L993.01,115.10L992.11,114.62L990.19,115.11L989.35,114.08L990.20,112.29L989.90,111.31L988.20,110.30L988.33,108.97L990.20,108.31L990.68,107.41L990.19,105.49L991.22,104.65L993.01,105.50L993.99,105.20L995.00,103.50L996.33,103.63L996.99,105.50L997.89,105.98L999.81,105.49L1000.65,106.52L999.80,108.31L1000.10,109.29Z" fill="#3a6ac8" stroke="#1a3a8a" stroke-width="0.6"/><circle cx="995" cy="110.3" r="2.5" fill="#e8f0fa"/>
<!-- select -->
<rect x="1044.5" y="87.5" width="20" height="13.8" fill="none" stroke="#5aaa2a" stroke-width="1.4"/>
<path d="M1064.5,101.5v14l3.2,-3.2l2.8,5.2l2.2,-1.1l-2.8,-5.2h4.3z" fill="#f6f6f6" stroke="#333" stroke-width="0.9"/>
</svg>
<svg class="a" style="left:0;top:0" width="1000" height="140"><path d="M168,128.7H174L171.00,132.6Z" fill="#333"/><path d="M251.25,128.7H256.9L254.07,132.6Z" fill="#333"/><path d="M321.25,128.7H326.9L324.07,132.6Z" fill="#333"/><path d="M488.3,128.7H493.7L491.00,132.6Z" fill="#333"/><path d="M564,128.7H569.5L566.75,132.6Z" fill="#333"/><path d="M741,128.7H746.7L743.85,132.6Z" fill="#333"/><path d="M924,128.7H929.8L926.90,132.6Z" fill="#333"/></svg>
<div class="a" style="left:4px;top:143px;width:300px;height:24px;background:#d5d5d5;border:1px solid #a9a9a9"></div>
<svg class="a" style="left:9px;top:151px" width="12" height="8"><path d="M0,4l5,-3.5v7z M5,4l5,-3.5v7z" fill="#333"/></svg>
<svg class="a" style="left:280px;top:148px" width="24" height="14"><circle cx="7.5" cy="7" r="5" fill="#222"/><rect x="4.5" y="6" width="6" height="2" fill="#fff"/><line x1="19.5" y1="2" x2="19.5" y2="12" stroke="#888"/><line x1="21.5" y1="2" x2="21.5" y2="12" stroke="#aaa"/></svg>
<div class="a" style="left:40px;top:173px;width:139px;height:20px;background:#d6d6d6"></div>
<div class="a" style="left:58px;top:197px;width:155px;height:20px;background:#d6d6d6"></div>
<div class="a" style="left:58px;top:221px;width:138px;height:20px;background:#d6d6d6"></div>
<div class="a" style="left:58px;top:245px;width:90px;height:20px;background:#d6d6d6"></div>
<div class="a" style="left:58px;top:269px;width:78px;height:20px;background:#d6d6d6"></div>
<div class="a" style="left:76px;top:293px;width:74px;height:20px;background:#d6d6d6"></div>
<div class="a" style="left:76px;top:317px;width:78px;height:20px;background:#d6d6d6"></div>
<div class="a" style="left:76px;top:341px;width:82px;height:20px;background:#d6d6d6"></div>
<div class="a" style="left:101px;top:341px;width:57px;height:20px;background:#b4d8fd"></div>
<svg class="a" style="left:0;top:0" width="320" height="370"><defs><linearGradient id="trig" x1="0" y1="0" x2="1" y2="0"><stop offset="0" stop-color="#e8e8e8"/><stop offset="1" stop-color="#555"/></linearGradient><radialGradient id="bulbg" cx="0.4" cy="0.35" r="0.7"><stop offset="0" stop-color="#fff8c0"/><stop offset="0.6" stop-color="#f6d040"/><stop offset="1" stop-color="#e0a810"/></radialGradient></defs><path d="M21,188.5L32,178V188.5Z" fill="url(#trig)" stroke="#222" stroke-width="1"/><path d="M40.5,201.5L49,207L40.5,212.5Z" fill="#f4f4f4" stroke="#333" stroke-width="1.2"/><path d="M40.5,225.5L49,231L40.5,236.5Z" fill="#f4f4f4" stroke="#333" stroke-width="1.2"/><path d="M39,284.5L50,274V284.5Z" fill="url(#trig)" stroke="#222" stroke-width="1"/><path d="M58.5,297.5L67,303L58.5,308.5Z" fill="#f4f4f4" stroke="#333" stroke-width="1.2"/><path d="M58.5,321.5L67,327L58.5,332.5Z" fill="#f4f4f4" stroke="#333" stroke-width="1.2"/><path d="M58.5,345.5L67,351L58.5,356.5Z" fill="#f4f4f4" stroke="#333" stroke-width="1.2"/><circle cx="50.7" cy="181.5" r="4.6" fill="url(#bulbg)" stroke="#c8a020" stroke-width="0.5"/><rect x="48.9" y="185.7" width="3.6" height="3.6" rx="1" fill="#9aa0a8" stroke="#555" stroke-width="0.5"/><path d="M69.0,190.5V177.5L71.0,175.5H76.0L78.0,177.5V190.5Z" fill="#eceef2" stroke="#333" stroke-width="0.9"/><line x1="69.0" y1="177.5" x2="76.0" y2="177.5" stroke="#333" stroke-width="0.7"/><path d="M75.5,190.5V183.5L77.5,181.5H84.0V188.5L82.0,190.5Z" fill="#e2e6ec" stroke="#333" stroke-width="0.9"/><path d="M75.5,183.5H82.0V190.5M82.0,183.5L84.0,181.5" fill="none" stroke="#333" stroke-width="0.7"/><circle cx="68.7" cy="205.5" r="4.6" fill="url(#bulbg)" stroke="#c8a020" stroke-width="0.5"/><rect x="66.9" y="209.7" width="3.6" height="3.6" rx="1" fill="#9aa0a8" stroke="#555" stroke-width="0.5"/><path d="M87.0,214.5V201.5L89.0,199.5H94.0L96.0,201.5V214.5Z" fill="#eceef2" stroke="#333" stroke-width="0.9"/><line x1="87.0" y1="201.5" x2="94.0" y2="201.5" stroke="#333" stroke-width="0.7"/><path d="M93.5,214.5V207.5L95.5,205.5H102.0V212.5L100.0,214.5Z" fill="#e2e6ec" stroke="#333" stroke-width="0.9"/><path d="M93.5,207.5H100.0V214.5M100.0,207.5L102.0,205.5" fill="none" stroke="#333" stroke-width="0.7"/><path d="M61.5,225.5h6l1,2h8v11h-15z" fill="#f4f4f4" stroke="#444" stroke-width="1"/><line x1="61.5" y1="228.5" x2="76.5" y2="228.5" stroke="#444"/><path d="M61.5,246.5h10l4,4v12h-14z" fill="#f7f7f7" stroke="#444" stroke-width="1"/><rect x="61" y="259" width="15" height="4" fill="#f0b020" stroke="#444" stroke-width="0.8"/><path d="M61.5,275.5h5l1,1h8v9h-14z" fill="#eee" stroke="#555" stroke-width="1"/><path d="M61.5,285.5l3,-5h13l-3,5z" fill="#ccd" stroke="#555" stroke-width="1"/><path d="M66,276l4,-3l4,4l-4,3z" fill="#fff" stroke="#555" stroke-width="0.8"/><path d="M67,278l5,2l-2,1z" fill="#5a9ad8"/><path d="M78.5,299.5h5l1,1h8v9h-14z" fill="#eee" stroke="#555" stroke-width="1"/><path d="M78.5,309.5l3,-5h13l-3,5z" fill="#ccd" stroke="#555" stroke-width="1"/><path d="M83,300l4,-3l4,4l-4,3z" fill="#fff" stroke="#555" stroke-width="0.8"/><path d="M84,302l5,2l-2,1z" fill="#5a9ad8"/><path d="M78.5,323.5h5l1,1h8v9h-14z" fill="#eee" stroke="#555" stroke-width="1"/><path d="M78.5,333.5l3,-5h13l-3,5z" fill="#ccd" stroke="#555" stroke-width="1"/><path d="M83,324l4,-3l4,4l-4,3z" fill="#fff" stroke="#555" stroke-width="0.8"/><path d="M84,326l5,2l-2,1z" fill="#5a9ad8"/><path d="M78.5,347.5h5l1,1h8v9h-14z" fill="#eee" stroke="#555" stroke-width="1"/><path d="M78.5,357.5l3,-5h13l-3,5z" fill="#ccd" stroke="#555" stroke-width="1"/><path d="M83,348l4,-3l4,4l-4,3z" fill="#fff" stroke="#555" stroke-width="0.8"/><path d="M84,350l5,2l-2,1z" fill="#5a9ad8"/></svg>
<svg class="a" style="left:1780px;top:80px" width="140" height="130">
<defs><radialGradient id="cs" cx="0.5" cy="0.5" r="0.5"><stop offset="0" stop-color="#000" stop-opacity="0.18"/><stop offset="1" stop-color="#000" stop-opacity="0"/></radialGradient>
<linearGradient id="cf" x1="0" y1="0" x2="0" y2="1"><stop offset="0" stop-color="#ececec"/><stop offset="1" stop-color="#d6d6d6"/></linearGradient></defs>
<ellipse cx="78" cy="92" rx="40" ry="16" fill="url(#cs)"/>
<path d="M41.9,38.1L76.25,22.5L111.25,38.75L76.25,57.5Z" fill="#ececec" stroke="#555" stroke-width="0.8"/>
<path d="M41.9,38.1L76.25,57.5V98.75L45,76.9Z" fill="url(#cf)" stroke="#666" stroke-width="0.8"/>
<path d="M76.25,57.5L111.25,38.75L110,76.25L76.25,98.75Z" fill="url(#cf)" stroke="#666" stroke-width="0.8"/>
<line x1="39.4" y1="31.25" x2="44.6" y2="77" stroke="#4a5ae8" stroke-width="1.4"/>
<line x1="44.6" y1="77" x2="81.25" y2="103.5" stroke="#ee6a6a" stroke-width="1.2"/>
<text x="35.5" y="29" font-family="Liberation Sans" font-size="12" fill="#5060e0">Z</text>
<text x="84" y="113" font-family="Liberation Sans" font-size="11" fill="#f06060">X</text>
<text transform="translate(70,34) rotate(24) skewX(-20)" font-family="Liberation Sans" font-size="7.5" fill="#8c8c8c">TOP</text>
<text transform="translate(47.5,60) rotate(31)" font-family="Liberation Sans" font-size="8.5" font-weight="bold" fill="#959595" textLength="27" lengthAdjust="spacingAndGlyphs">FRONT</text>
<text transform="translate(84,80) rotate(-38)" font-family="Liberation Sans" font-size="8.5" font-weight="bold" fill="#959595" textLength="25" lengthAdjust="spacingAndGlyphs">RIGHT</text>
</svg>
<div class="a" style="left:1666px;top:263px;width:250px;height:395px;background:#dedede;border:1px solid #9a9a9a"></div>
<div class="a" style="left:1667px;top:264px;width:248px;height:23px;background:#d3d3d3;border-bottom:1px solid #b5b5b5"></div>
<div class="a" style="left:1667px;top:287px;width:248px;height:28px;background:#d8d8d8;border-bottom:1px solid #bcbcbc"></div>
<div class="a" style="left:1694px;top:290px;width:29px;height:26px;background:#dedede;border:1px solid #c4c4c4;border-bottom:none"></div>
<div class="a" style="left:1752px;top:291px;width:1px;height:23px;background:#c4c4c4"></div>
<div class="a" style="left:1781px;top:291px;width:1px;height:23px;background:#c4c4c4"></div>
<div class="a" style="left:1810px;top:291px;width:1px;height:23px;background:#c4c4c4"></div>
<svg class="a" style="left:1660px;top:260px" width="260" height="400">
<defs><linearGradient id="cbg" x1="0" y1="0" x2="0" y2="1"><stop offset="0" stop-color="#f4f4f4"/><stop offset="1" stop-color="#c4c4c4"/></linearGradient></defs>
<line x1="9.5" y1="11" x2="9.5" y2="20" stroke="#888"/><line x1="11.5" y1="11" x2="11.5" y2="20" stroke="#aaa"/>
<circle cx="22.3" cy="15.4" r="4.8" fill="#222"/><rect x="19.3" y="14.4" width="6" height="2" fill="#fff"/>
<path d="M240.7,13l4.8,3l-4.8,3zM245.5,13l4.8,3l-4.8,3z" fill="#222"/>
<!-- tabs -->
<path d="M16.5,38.5C16.5,35.6 27.2,35.6 27.2,38.5V41C27.2,42.2 25.4,42.4 25.2,43.2L23.3,51.2C22.5,52.6 20.3,52.6 19.5,51.2L18.2,43.2C18,42.4 16.5,42.2 16.5,41Z" fill="#f0f0f0" stroke="#333" stroke-width="0.9"/>
<path d="M19,49.5L24.6,43.8L24,47L19.6,51.5Z" fill="#222"/>
<path d="M41.3,42.9L45.9,38.7H54.7L49.7,42.9Z" fill="#f8f8f8" stroke="#222" stroke-width="0.9"/>
<path d="M41.3,42.9H49.7V50.6H41.3Z" fill="#eaf0f6" stroke="#222" stroke-width="0.9"/>
<path d="M49.7,42.9L54.7,38.7V45.6L49.7,50.6Z" fill="#c8d4e0" stroke="#222" stroke-width="0.9"/>
<path d="M46.3,37.6L48.3,35.3H55.9V42.2L53.9,44.6V39.5H46.3Z" fill="#9cc8ee" stroke="#1a5ac0" stroke-width="0.9"/>
<path d="M70,40.6L73.9,35.3H85L81.1,40.6Z" fill="#f0a020" stroke="#b07010" stroke-width="0.5"/>
<g fill="#f8d060"><circle cx="75" cy="37" r="0.5"/><circle cx="78" cy="37" r="0.5"/><circle cx="81" cy="37" r="0.5"/><circle cx="74" cy="39" r="0.5"/><circle cx="77" cy="39" r="0.5"/><circle cx="80" cy="39" r="0.5"/></g>
<path d="M70.4,42.9H78.8V50.6H70.4Z" fill="#eaf0f6" stroke="#222" stroke-width="0.9"/>
<path d="M70.4,42.9L72.5,40.6H80.9L78.8,42.9Z" fill="#f8f8f8" stroke="#222" stroke-width="0.6"/>
<path d="M78.8,42.9L85,37.2V44.4L78.8,50.6Z" fill="#c8d4e0" stroke="#222" stroke-width="0.9"/>
<path d="M99.1,35.3V50.6H114.8V35.3H111.7V46.4H102.2V35.3Z" fill="#f4f4f4" stroke="#222" stroke-width="0.9"/>
<rect x="102.2" y="38.3" width="9.5" height="2" fill="#4a90d8"/><rect x="102.2" y="42.2" width="9.5" height="2" fill="#4a90d8"/>
<rect x="128.7" y="35.8" width="14.7" height="6.6" fill="#dcdcdc" stroke="#f0e000" stroke-width="1.3"/>
<line x1="128.2" y1="43.4" x2="143.9" y2="43.4" stroke="#30b040" stroke-width="1.3"/>
<path d="M128.5,50.5V46.5H133.7V40.5H138.2V46.5H143.6V50.5Z" fill="#f0f0f0" stroke="#222" stroke-width="0.9"/>
<!-- geometry -->
<path d="M16.5,67.5h8.5l-4.25,5.5z" fill="#333"/>
<!-- button -->
<rect x="186.5" y="84.6" width="55.5" height="22.7" fill="#5b8ab5"/>
<path d="M192.3,88.3v14.2l3.3,-3.2l2.6,4.6l1.8,-0.9l-2.6,-4.6h4.3z" fill="#fff" stroke="#333" stroke-width="0.6"/>
<rect x="189.5" y="113.5" width="39" height="16" fill="#fff" stroke="#888"/>
<rect x="228.5" y="113.5" width="13" height="16" fill="#e8e8e8" stroke="#aaa"/>
<path d="M232.5,120.5h5l-2.5,-3zM232.5,124h5l-2.5,3z" fill="#222"/>
<rect x="189.5" y="141.5" width="13" height="12" rx="2.5" fill="url(#cbg)" stroke="#555"/>
<line x1="8" y1="167.5" x2="242" y2="167.5" stroke="#c4c4c4" stroke-width="1.5"/><line x1="8" y1="203.5" x2="242" y2="203.5" stroke="#c4c4c4" stroke-width="1.5"/><line x1="8" y1="239.5" x2="242" y2="239.5" stroke="#c4c4c4" stroke-width="1.5"/><line x1="8" y1="275.5" x2="242" y2="275.5" stroke="#c4c4c4" stroke-width="1.5"/><line x1="8" y1="311.5" x2="242" y2="311.5" stroke="#c4c4c4" stroke-width="1.5"/><rect x="17.5" y="177.2" width="13" height="12.5" rx="2.5" fill="url(#cbg)" stroke="#555"/><rect x="17.5" y="213.2" width="13" height="12.5" rx="2.5" fill="url(#cbg)" stroke="#555"/><rect x="17.5" y="249.2" width="13" height="12.5" rx="2.5" fill="url(#cbg)" stroke="#555"/><rect x="17.5" y="285.2" width="13" height="12.5" rx="2.5" fill="url(#cbg)" stroke="#555"/><rect x="17.5" y="321.2" width="13" height="12.5" rx="2.5" fill="url(#cbg)" stroke="#555"/><rect x="7" y="361.5" width="248" height="35.8" fill="#d3d3d3"/><line x1="7" y1="361.5" x2="255" y2="361.5" stroke="#aaa"/>
<circle cx="25.8" cy="379.7" r="6" fill="#111"/><rect x="24.8" y="378.3" width="2" height="5" fill="#fff"/><rect x="24.8" y="375.3" width="2" height="1.8" fill="#fff"/>
<rect x="109.5" y="370.8" width="59" height="17.6" fill="#e9e9e9" stroke="#c0c0c0"/>
<rect x="179.8" y="370.8" width="59" height="17.6" fill="#e9e9e9" stroke="#c0c0c0"/>
</svg>
<div class="a" style="left:4px;top:1011px;width:300px;height:25px;background:#d3d3d3;border:1px solid #a9a9a9"></div>
<svg class="a" style="left:280px;top:1016px" width="24" height="16"><circle cx="7" cy="7.5" r="5.2" fill="#222"/><path d="M4,7.5h6M7,4.5v6" stroke="#fff" stroke-width="1.6"/><line x1="19.5" y1="2" x2="19.5" y2="13" stroke="#888"/><line x1="21.5" y1="2" x2="21.5" y2="13" stroke="#aaa"/></svg>
<div class="a" style="left:853px;top:1012px;width:145px;height:24px;background:#cbcbcb"></div>
<div class="a" style="left:1004px;top:1012px;width:63px;height:24px;background:#cbcbcb"></div>
<svg class="a" style="left:840px;top:1000px" width="240" height="40">
<path d="M24.5,30V18" stroke="#333" stroke-width="3"/><path d="M24.5,30V18" stroke="#fff" stroke-width="1.2"/><path d="M21,19l3.5,-4l3.5,4z" fill="#fff" stroke="#333" stroke-width="0.8"/>
<ellipse cx="24" cy="24.5" rx="8" ry="3" fill="none" stroke="#333" stroke-width="1"/><path d="M18,27l4,-2v4z" fill="#111"/>
<path d="M36,22h7l-3.5,4z" fill="#222"/>
<rect x="49.5" y="22.5" width="15" height="9" fill="#f4f4f4" stroke="#333" stroke-width="1"/><rect x="52.5" y="25.5" width="9" height="3" fill="#aab" stroke="#333" stroke-width="0.6"/><path d="M51,22l3,-5l3,3l3,-2l2,-1" fill="none" stroke="#333" stroke-width="0.8"/>
<path d="M80.5,31.5C78,29.5 76,26.5 75.6,24.2C75.3,22.8 76.8,22.3 77.8,23.3L79,24.8V19C79,17.8 80.8,17.8 80.8,19V23.5V17.3C80.8,16 82.7,16 82.7,17.3V23.3V17.8C82.7,16.6 84.6,16.6 84.6,17.8V23.5V19.3C84.6,18.2 86.4,18.2 86.4,19.3V26.5C86.4,29 85.5,30.5 84.5,31.5Z" fill="#fafafa" stroke="#333" stroke-width="0.9" stroke-linejoin="round"/><circle cx="106" cy="23" r="4.5" fill="#e0e8ee" stroke="#333" stroke-width="1.2"/><path d="M109,26l4,4" stroke="#333" stroke-width="2"/><path d="M112.3,17.3h4.4M114.5,15v4.6M112.3,21.6h4.4" stroke="#333" stroke-width="1"/>
<rect x="127.5" y="16.5" width="16" height="15" fill="none" stroke="#444" stroke-width="0.8" stroke-dasharray="1.5 1.5"/>
<circle cx="134" cy="23" r="5.5" fill="#e0e8ee" stroke="#333" stroke-width="1.2"/><path d="M138,27l4,4" stroke="#333" stroke-width="2"/>
<path d="M148,22h7l-3.5,4z" fill="#222"/>
<rect x="168.5" y="16.5" width="15.5" height="12" rx="1" fill="#f4f4f4" stroke="#333" stroke-width="1.1"/><rect x="170.5" y="18.5" width="11.5" height="8" fill="#9ab4e0" stroke="#3a5a9a" stroke-width="0.8"/><path d="M173,28v2h5v-2z" fill="#333"/><rect x="171" y="30.5" width="10" height="1.5" fill="#333"/>
<path d="M186,22h7l-3.5,4z" fill="#222"/>
<rect x="199.5" y="16.5" width="16" height="15" fill="#fff" stroke="#333" stroke-width="1"/>
<g stroke="#777" stroke-width="0.8"><path d="M203.5,17v14M207.5,17v14M211.5,17v14M200,20.5h15M200,24.5h15M200,28.5h15"/></g>
<path d="M217,22h7l-3.5,4z" fill="#222"/>
</svg>
<svg class="a" style="left:0;top:0;font-family:Liberation Sans" width="1920" height="1040"><text x="23.25" y="15.80" font-size="12.6" font-weight="normal" fill="#6a6a6a" textLength="109.15" lengthAdjust="spacingAndGlyphs">Autodesk Fusion 360</text><text x="1784.60" y="42.10" font-size="11.6" font-weight="normal" fill="#4a4a4a" textLength="57.00" lengthAdjust="spacingAndGlyphs">Xavier Klein</text><text x="35.75" y="70.75" font-size="12.8" font-weight="bold" fill="#4a4a4a" textLength="88.30" lengthAdjust="spacingAndGlyphs">bureau final v3*</text><text x="43.50" y="113.90" font-size="11.5" font-weight="bold" fill="#ffffff" textLength="26.80" lengthAdjust="spacingAndGlyphs">CAM</text><text x="133.00" y="136.00" font-size="11.4" font-weight="normal" fill="#505050" textLength="32.30" lengthAdjust="spacingAndGlyphs">SETUP</text><text x="234.50" y="136.00" font-size="11.4" font-weight="normal" fill="#505050" textLength="13.30" lengthAdjust="spacingAndGlyphs">2D</text><text x="304.50" y="136.00" font-size="11.4" font-weight="normal" fill="#505050" textLength="13.55" lengthAdjust="spacingAndGlyphs">3D</text><text x="353.70" y="136.00" font-size="11.4" font-weight="normal" fill="#505050" textLength="45.50" lengthAdjust="spacingAndGlyphs">DRILLING</text><text x="427.50" y="136.00" font-size="11.4" font-weight="normal" fill="#505050" textLength="57.70" lengthAdjust="spacingAndGlyphs">MULTI-AXIS</text><text x="516.20" y="136.00" font-size="11.4" font-weight="normal" fill="#505050" textLength="44.80" lengthAdjust="spacingAndGlyphs">TURNING</text><text x="590.90" y="136.00" font-size="11.4" font-weight="normal" fill="#505050" textLength="43.40" lengthAdjust="spacingAndGlyphs">CUTTING</text><text x="692.50" y="136.00" font-size="11.4" font-weight="normal" fill="#505050" textLength="45.50" lengthAdjust="spacingAndGlyphs">ACTIONS</text><text x="799.20" y="136.00" font-size="11.4" font-weight="normal" fill="#505050" textLength="42.10" lengthAdjust="spacingAndGlyphs">INSPECT</text><text x="875.50" y="136.00" font-size="11.4" font-weight="normal" fill="#505050" textLength="45.50" lengthAdjust="spacingAndGlyphs">MANAGE</text><text x="960.50" y="136.00" font-size="11.4" font-weight="normal" fill="#505050" textLength="42.20" lengthAdjust="spacingAndGlyphs">ADD-INS</text><text x="1034.90" y="136.00" font-size="11.4" font-weight="normal" fill="#505050" textLength="38.40" lengthAdjust="spacingAndGlyphs">SELECT</text><text x="30.70" y="159.10" font-size="11.3" font-weight="normal" fill="#5a5a5a" textLength="52.40" lengthAdjust="spacingAndGlyphs">BROWSER</text><text x="98.20" y="186.80" font-size="11.2" font-weight="normal" fill="#555" textLength="71.70" lengthAdjust="spacingAndGlyphs">bureau final v3</text><text x="116.00" y="210.80" font-size="11.2" font-weight="normal" fill="#555" textLength="88.50" lengthAdjust="spacingAndGlyphs">CAM Component:1</text><text x="91.20" y="234.80" font-size="11.2" font-weight="normal" fill="#555" textLength="92.60" lengthAdjust="spacingAndGlyphs">CAM Named Views</text><text x="91.20" y="258.80" font-size="11.2" font-weight="normal" fill="#555" textLength="46.40" lengthAdjust="spacingAndGlyphs">Units: mm</text><text x="91.00" y="282.80" font-size="11.2" font-weight="normal" fill="#555" textLength="33.80" lengthAdjust="spacingAndGlyphs">Setups</text><text x="109.00" y="306.80" font-size="11.2" font-weight="normal" fill="#555" textLength="33.30" lengthAdjust="spacingAndGlyphs">Setup1</text><text x="109.00" y="330.80" font-size="11.2" font-weight="normal" fill="#555" textLength="34.30" lengthAdjust="spacingAndGlyphs">Setup2</text><text x="109.50" y="354.80" font-size="11.2" font-weight="bold" fill="#1b3c85" textLength="37.20" lengthAdjust="spacingAndGlyphs">Setup4</text><text x="1692.50" y="278.70" font-size="10.8" font-weight="normal" fill="#606060" textLength="146.60" lengthAdjust="spacingAndGlyphs">2D CONTOUR : 2D CONTOUR8</text><text x="1691.20" y="333.60" font-size="10.9" font-weight="bold" fill="#444" textLength="54.80" lengthAdjust="spacingAndGlyphs">Geometry</text><text x="1676.90" y="359.90" font-size="10.9" font-weight="normal" fill="#555" textLength="85.00" lengthAdjust="spacingAndGlyphs">Contour Selection</text><text x="1866.10" y="359.90" font-size="10.9" font-weight="normal" fill="#ffffff" textLength="33.60" lengthAdjust="spacingAndGlyphs">Nothi...</text><text x="1676.90" y="385.60" font-size="10.9" font-weight="normal" fill="#555" textLength="142.00" lengthAdjust="spacingAndGlyphs">Tangential Extension Distance</text><text x="1853.00" y="384.50" font-size="10.9" font-weight="normal" fill="#333" textLength="25.20" lengthAdjust="spacingAndGlyphs">0 mm</text><text x="1676.90" y="411.60" font-size="10.9" font-weight="normal" fill="#555" textLength="161.60" lengthAdjust="spacingAndGlyphs">Separate Tangential End Extensi...</text><text x="1697.00" y="448.00" font-size="11.6" font-weight="bold" fill="#4a4a4a" textLength="85.50" lengthAdjust="spacingAndGlyphs">Stock Contours</text><text x="1697.00" y="484.00" font-size="11.6" font-weight="bold" fill="#4a4a4a" textLength="25.60" lengthAdjust="spacingAndGlyphs">Tabs</text><text x="1697.00" y="520.00" font-size="11.6" font-weight="bold" fill="#4a4a4a" textLength="84.00" lengthAdjust="spacingAndGlyphs">Rest Machining</text><text x="1697.00" y="556.00" font-size="11.6" font-weight="bold" fill="#4a4a4a" textLength="78.30" lengthAdjust="spacingAndGlyphs">Wrap Toolpath</text><text x="1697.00" y="592.00" font-size="11.6" font-weight="bold" fill="#4a4a4a" textLength="87.10" lengthAdjust="spacingAndGlyphs">Tool Orientation</text><text x="1789.80" y="643.90" font-size="12.4" font-weight="normal" fill="#555" textLength="17.40" lengthAdjust="spacingAndGlyphs">OK</text><text x="1848.70" y="643.90" font-size="12.4" font-weight="normal" fill="#555" textLength="39.30" lengthAdjust="spacingAndGlyphs">Cancel</text><text x="30.75" y="1026.90" font-size="11.6" font-weight="normal" fill="#555" textLength="57.65" lengthAdjust="spacingAndGlyphs">COMMENTS</text></svg>
<svg class="a" style="left:1635px;top:0px" width="14" height="20"><path d="M1,0.5V16l3.5,-3.5l2.5,5.5l2,-1l-2.5,-5.5h5z" fill="#fff" stroke="#111" stroke-width="1"/></svg>
</body></html>
